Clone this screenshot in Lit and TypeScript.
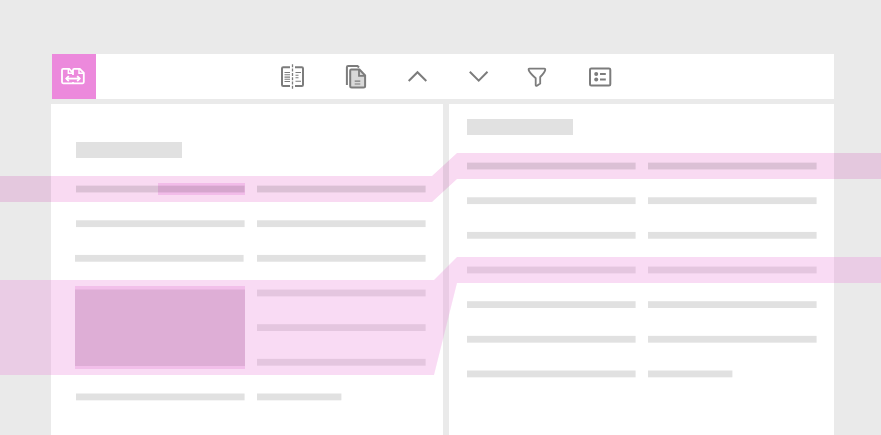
import { LitElement, html, svg, css } from "lit";
import { customElement, property } from "lit/decorators.js";

const BAR_HEIGHT = 6.8;
const ROW_STEP = 34.65;

const icons = {
  compare: svg`
    <path d="M10 3.200H3.200Q2 3.200 2 4.400V20.800Q2 22 3.200 22H10M15 3.200H21.800Q23 3.200 23 4.400V20.800Q23 22 21.800 22H15" stroke-width="2"/>
    <path d="M12.500 .3V25.500" stroke-width="1.300" stroke-dasharray="3 1.300"/>
    <path d="M4.500 8.500H10M4.500 10.800H10M4.500 13.100H10M4.500 15.300H10M4.500 17.500H10M15.500 8.500H21M15.500 11.200H18.500M15.500 13.800H18.500M15.500 17.200H21" stroke-width="1.100"/>`,
  copy: svg`
    <path d="M4.900 21V3.200Q4.900 2 6.100 2H15.500L17 3.500" stroke-width="2"/>
    <path d="M9.200 5.500H17.500L23.100 11.500V22Q23.100 23.500 21.500 23.500H9.700Q8.200 23.500 8.200 22V6.500Q8.200 5.500 9.200 5.500Z" fill="#d9d9d9" stroke-width="2"/>
    <path d="M17 6V11.800H23" stroke-width="1.800"/>
    <path d="M12.700 17.200H18.300M12.700 20H18.300" stroke-width="1.200"/>`,
  up: svg`<path d="M5.700 17L14.500 8.200L23.300 17" stroke-width="2"/>`,
  down: svg`<path d="M4.800 7.800L13.700 16.600L22.500 7.800" stroke-width="2"/>`,
  filter: svg`<path d="M3.300 4.600H18.300Q19.500 4.600 19.200 6Q18.700 8.500 14.200 13V19.500L11 21.700Q9.700 22.200 9.700 21V14.200Q3.200 8.500 2.700 6Q2.400 4.600 3.300 4.600Z" stroke-width="1.800"/>`,
  list: svg`
    <rect x="2" y="4.500" width="20.300" height="17" rx="1.300" stroke-width="2"/>
    <path d="M12 10H17.800M12 15.500H17.800" stroke-width="1.800"/>
    <circle cx="8.200" cy="10" r="2" fill="#7c7c7c" stroke="none"/>
    <circle cx="8.200" cy="15.500" r="2" fill="#7c7c7c" stroke="none"/>`,
};

@customElement("tool-bar")
class ToolBar extends LitElement {
  static styles = css`
    :host { display: flex; height: 45px; background: #fff; }
    .brand { width: 44px; display: flex; background: #ec89dc; }
    .brand svg { width: 44px; height: 45px; }
    .tools { display: grid; grid-template-columns: repeat(6, 25px); column-gap: 36.500px; margin: 10px 0 0 184px; }
    .tools svg { width: 25px; height: 26px; }
    svg { fill: none; stroke: #7c7c7c; display: block; }
    .brand svg { stroke: #fff; }
  `;
  render() {
    return html`
      <div class="brand">
        <svg viewBox="0 0 44 45">
          <path d="M21 28V29.300H11.200Q10 29.300 10 28.100V16Q10 14.800 11.200 14.800H17.200L21 18.800V21V16Q21 14.800 22.200 14.800H27.800L31.800 18.800V28.100Q31.800 29.300 30.600 29.300H21" stroke-width="1.800"/>
          <path d="M16.300 15V19.300H20.800M27 15V19.300H31.500" stroke-width="1.400"/>
          <path d="M14.500 24.600H27.500" stroke-width="1.800"/>
          <path d="M16.800 22.100L14.300 24.600L16.800 27.100M25.200 22.100L27.700 24.600L25.200 27.100" stroke-width="1.800"/>
        </svg>
      </div>
      <div class="tools">
        ${Object.values(icons).map((i) => html`<svg viewBox="0 0 25 26">${i}</svg>`)}
      </div>`;
  }
}

@customElement("document-pane")
class DocumentPane extends LitElement {
  static styles = css`
    :host { display: block; background: #fff; overflow: hidden; }
    .heading { width: 106px; height: 16px; margin-bottom: 27px; background: #e1e1e1; }
    .rows { display: grid; grid-template-columns: 169px 169px; column-gap: 12px; }
    svg { display: block; width: 169px; height: 9px; fill: #e1e1e1; overflow: visible; }
  `;
  @property({ type: Number }) outdentRow = -1;
  render() {
    const rows = Array.from({ length: 7 }, (_, i) => 0.62 + ROW_STEP * i);
    const heights = rows.map((t, i) => (i < 6 ? Math.floor(rows[i + 1]) - Math.floor(t) : 9));
    return html`
      <div class="heading"></div>
      <div class="rows" style="grid-template-rows:${heights.map((h) => h + "px").join(" ")}">
        ${rows.map((t, i) => [168.6, i === 6 ? 84.4 : 168.6].map((w, col) => html`
          <svg viewBox="0 0 169 9"><rect x=${i === this.outdentRow && col === 0 ? -1 : 0} y=${(t % 1).toFixed(2)} width=${w} height=${BAR_HEIGHT}></rect></svg>`))}
      </div>`;
  }
}

@customElement("app-root")
class AppRoot extends LitElement {
  static styles = css`
    :host { display: block; position: relative; width: 881px; height: 435px; background: #eaeaea; overflow: hidden; isolation: isolate; font-family: "Liberation Sans", sans-serif; }
    .page { box-sizing: border-box; height: 435px; padding: 54px 47px 0 51px; display: flex; flex-direction: column; gap: 5px; }
    tool-bar { margin-left: 1px; flex: none; }
    .panes { flex: 1; display: grid; grid-template-columns: 392px 385px; gap: 6px; min-height: 0; }
    .left { padding: 38px 0 0 25px; }
    .right { padding: 15px 0 0 18px; }
    .links { position: absolute; inset: 0; width: 881px; height: 435px; mix-blend-mode: multiply; pointer-events: none; }
    .blend { mix-blend-mode: normal; }
  `;
  render() {
    return html`
      <div class="page">
        <tool-bar></tool-bar>
        <div class="panes">
          <document-pane class="left" .outdentRow=${2}></document-pane>
          <document-pane class="right"></document-pane>
        </div>
      </div>
      <svg class="links" viewBox="0 0 881 435">
        <path d="M0 176H432L457 153H881V179H457L432 202H0Z" fill="#f9daf2"/>
        <rect x="158" y="183" width="87" height="12" fill="#f2bce9"/>
      </svg>
      <svg class="links blend" viewBox="0 0 881 435">
        <path d="M0 280H434L457 257H881V283H457L434 375H0Z" fill="#ec88da" fill-opacity=".3"/>
        <rect x="75" y="286" width="170" height="83" fill="#f2bfea"/>
        <rect x="75" y="289.500" width="170" height="76.500" fill="#deaed6"/>
      </svg>`;
  }
}
